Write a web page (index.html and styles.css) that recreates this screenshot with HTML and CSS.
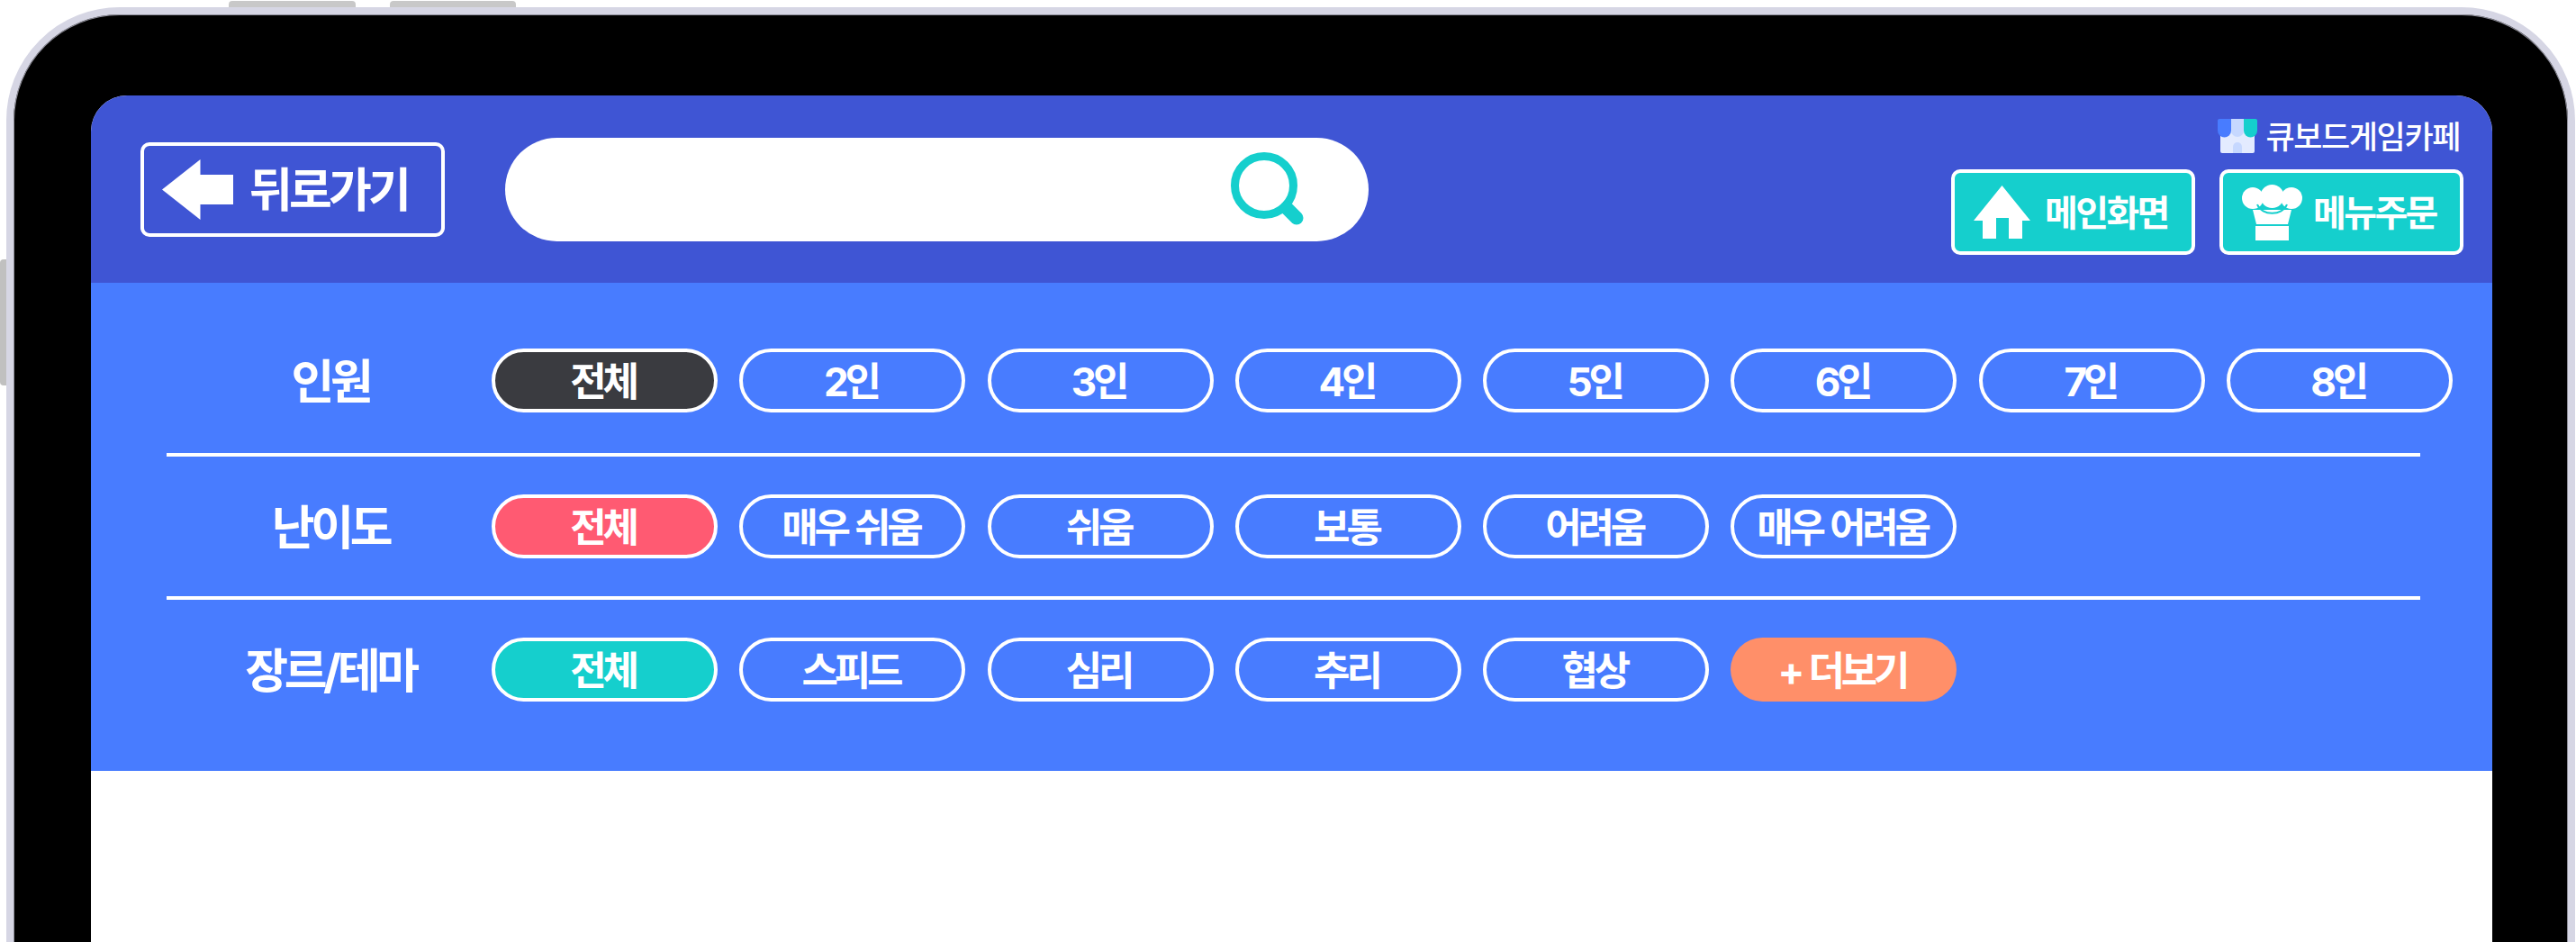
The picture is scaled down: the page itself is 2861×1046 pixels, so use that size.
FILE: index.html
```html
<!DOCTYPE html>
<html lang="ko">
<head>
<meta charset="utf-8">
<title>큐보드게임카페</title>
<link rel="stylesheet" href="styles.css">
</head>
<body>
<div class="page">
  <span class="hw hw-top1"></span>
  <span class="hw hw-top2"></span>
  <span class="hw hw-side"></span>
  <div class="device">
    <main class="screen">
      <header class="topbar">
        <button class="back">
          <svg class="back-icon" viewBox="0 0 79 67"><path d="M0 33.500L42.500 0V17H79V50H42.500V67Z" fill="#fff"/></svg>
          <span class="back-text">뒤로가기</span>
        </button>
        <div class="search">
          <svg class="search-icon" viewBox="0 0 82 82"><circle cx="37" cy="37" r="32.500" fill="none" stroke="#15cfcd" stroke-width="9"/><path d="M62 62L73 73" stroke="#15cfcd" stroke-width="15" stroke-linecap="round"/></svg>
        </div>
        <div class="side">
          <div class="shop">
            <svg class="shop-icon" viewBox="0 0 44 38">
              <path d="M3 6H41V36a2 2 0 0 1-2 2H5a2 2 0 0 1-2-2Z" fill="#e3ebff"/>
              <path d="M15 0H29V13a7 7 0 0 1-14 0Z" fill="#c6d8ff"/>
              <path d="M2 0H15V13a7 7 0 0 1-15 0V2a2 2 0 0 1 2-2Z" fill="#487cff"/>
              <path d="M29 0H42a2 2 0 0 1 2 2V13a7.500 7.500 0 0 1-15 0Z" fill="#15cfcd"/>
              <path d="M17 38V31a5 5 0 0 1 10 0V38Z" fill="#c6d8ff"/>
            </svg>
            <span class="shop-name">큐보드게임카페</span>
          </div>
          <div class="actions">
            <button class="action action-home">
              <svg class="home-icon" viewBox="0 0 63 59"><path d="M31.500 0L63 39H54V59H39V36H25V59H10V39H0Z" fill="#fff"/></svg>
              <span class="action-text">메인화면</span>
            </button>
            <button class="action action-menu">
              <svg class="hat-icon" viewBox="0 0 67 62">
                <g fill="#fff"><circle cx="12" cy="15" r="12"/><circle cx="33.500" cy="13" r="13"/><circle cx="55" cy="15" r="12"/>
                <path d="M12 28H55L51 44H16Z"/><path d="M15 46H52V62H15Z"/></g>
                <path d="M17 22C22 35 45 35 50 22" fill="none" stroke="#15cfcd" stroke-width="2"/>
              </svg>
              <span class="action-text">메뉴주문</span>
            </button>
          </div>
        </div>
      </header>
      <section class="filters">
        <div class="row">
          <h2 class="label">인원</h2>
          <div class="pills">
            <button class="pill pill-dark">전체</button>
            <button class="pill">2인</button>
            <button class="pill">3인</button>
            <button class="pill">4인</button>
            <button class="pill">5인</button>
            <button class="pill">6인</button>
            <button class="pill">7인</button>
            <button class="pill">8인</button>
          </div>
        </div>
        <hr class="rule rule-first">
        <div class="row">
          <h2 class="label">난이도</h2>
          <div class="pills">
            <button class="pill pill-red">전체</button>
            <button class="pill">매우 쉬움</button>
            <button class="pill">쉬움</button>
            <button class="pill">보통</button>
            <button class="pill">어려움</button>
            <button class="pill">매우 어려움</button>
          </div>
        </div>
        <hr class="rule">
        <div class="row">
          <h2 class="label">장르/테마</h2>
          <div class="pills">
            <button class="pill pill-teal">전체</button>
            <button class="pill">스피드</button>
            <button class="pill">심리</button>
            <button class="pill">추리</button>
            <button class="pill">협상</button>
            <button class="pill pill-orange">+ 더보기</button>
          </div>
        </div>
      </section>
      <div class="content"></div>
    </main>
  </div>
</div>
</body>
</html>
```
FILE: styles.css
```css
* { box-sizing: border-box; }
html, body { margin: 0; height: 1046px; overflow: hidden; background: #fff; }
body { font-family: "Inter", "Noto Sans CJK KR", sans-serif; color: #fff; }
button { font: inherit; color: inherit; background: none; border: 0; padding: 0; }

.page { position: relative; height: 1046px; padding: 8px 1px 0 7px; }
.hw { position: absolute; background: #c8c8c8; }
.hw-top1 { left: 254px; top: 1px; width: 141px; height: 8px; border-radius: 4px 4px 0 0; }
.hw-top2 { left: 433px; top: 1px; width: 140px; height: 8px; border-radius: 4px 4px 0 0; }
.hw-side { left: 0; top: 288px; width: 8px; height: 140px; border-radius: 4px 0 0 4px; background: #c0c0c0; }

.device {
  position: relative;
  height: 1200px;
  padding: 90px 84px 0 86px;
  background: #000;
  border: 8px solid #d6d6e4;
  border-radius: 126px;
  box-shadow: inset 0 0 0 1px #8f8f9a;
}

.screen { display: flex; flex-direction: column; height: 1090px; background: #fff; border-radius: 40px 40px 0 0; overflow: hidden; }

.topbar { display: flex; align-items: center; height: 208px; flex: none; padding: 0 32px 0 55px; background: #3f55d4; }

.back { display: flex; align-items: center; width: 338px; height: 105px; padding-left: 20px; border: 4px solid #fff; border-radius: 10px; }
.back-icon { width: 79px; height: 67px; }
.back-text { margin-left: 18px; padding-top: 3px; font-size: 52px; font-weight: 700; letter-spacing: -3.800px; line-height: 1; }

.search { display: flex; align-items: center; justify-content: flex-end; width: 959px; height: 115px; margin-left: 67px; padding-right: 71px; background: #fff; border-radius: 58px; }
.search-icon { width: 82px; height: 82px; }

.side { display: flex; flex-direction: column; align-items: flex-end; align-self: flex-start; margin-left: auto; padding-top: 26px; }
.shop { display: flex; align-items: center; height: 38px; margin-right: 4px; }
.shop-icon { width: 44px; height: 38px; }
.shop-name { margin-left: 9px; padding-top: 3px; font-size: 35px; font-weight: 500; letter-spacing: -1.400px; line-height: 1; }
.actions { display: flex; gap: 27px; margin-top: 18px; }
.action { display: flex; align-items: center; height: 95px; background: #15cfcd; border: 4px solid #fff; border-radius: 10px; font-size: 40px; font-weight: 700; letter-spacing: -2.600px; line-height: 1; }
.action-text { padding-top: 3px; }
.action-home { width: 271px; padding-left: 21px; }
.action-menu { width: 271px; padding-left: 21px; }
.home-icon { width: 63px; height: 59px; margin-right: 16px; }
.hat-icon { width: 67px; height: 62px; margin-right: 12px; }

.filters { flex: none; padding: 73px 0 77px; background: #487cff; }
.row { display: grid; grid-template-columns: 336px 1fr; column-gap: 9px; align-items: center; padding-left: 100px; }
.label { margin: 0; padding: 5px 4px 0 0; font-size: 52px; font-weight: 700; letter-spacing: -4.400px; line-height: 1; text-align: center; }
.pills { display: flex; gap: 24.300px; }
.pill { flex: none; width: 251px; height: 71px; padding: 3px 4px 0 0; border: 4px solid #fff; border-radius: 36px; font-size: 44px; font-weight: 700; letter-spacing: -4.200px; word-spacing: 2px; line-height: 1; white-space: nowrap; }
.pill-dark { background: #3a3b40; }
.pill-red { background: #ff5a72; }
.pill-teal { background: #15cfcd; }
.pill-orange { background: #ff8f69; border: 0; }

.rule { height: 4px; margin: 42px 80px 42px 84px; background: #fff; border: 0; }
.rule-first { margin-top: 45px; }

.content { flex: 1; background: #fff; }
```
